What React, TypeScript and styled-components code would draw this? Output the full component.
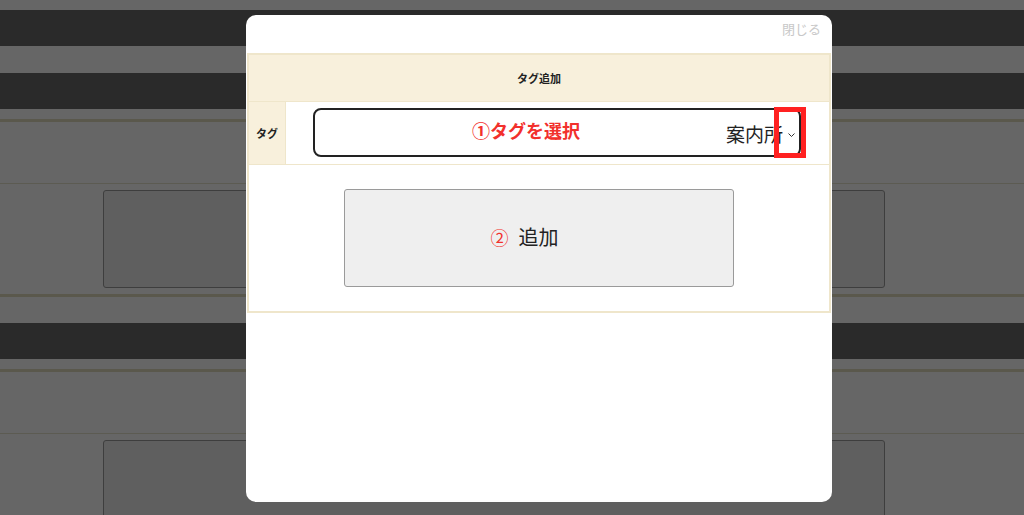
import React from "react";
import styled, { createGlobalStyle } from "styled-components";

const Global = createGlobalStyle`
  html, body { margin: 0; padding: 0; }
  body {
    width: 1024px;
    height: 515px;
    overflow: hidden;
    background: #666666;
    font-family: "Noto Sans CJK JP", "Noto Sans", sans-serif;
  }
`;

const Page = styled.div`
  position: relative;
  width: 1024px;
  height: 515px;
  overflow: hidden;
  background: #666666;
  padding-top: 10px;
  box-sizing: border-box;
`;

const DarkBar = styled.div<{ $gap?: number }>`
  height: 36px;
  background: #2a2a2a;
  margin-top: ${(p) => p.$gap ?? 0}px;
`;

const Section = styled.section`
  margin-top: 10px;
  border-top: 3px solid #5a584c;
  border-bottom: 3px solid #5a584c;
  margin-bottom: 26px;
`;

const SectionHead = styled.div`
  height: 61px;
  border-bottom: 1px solid #5c5b52;
`;

const SectionBody = styled.div`
  padding: 6px 0;
  display: flex;
  justify-content: flex-start;
  padding-left: 103px;
`;

const BgBox = styled.div`
  width: 780px;
  height: 96px;
  border: 1px solid #3e3e3e;
  border-radius: 3px;
  background: #5f5f5f;
`;

const Modal = styled.div`
  position: absolute;
  left: 246px;
  top: 15px;
  width: 586px;
  height: 487px;
  background: #ffffff;
  border-radius: 10px;
  display: flex;
  flex-direction: column;
  padding: 0 1px;
  box-sizing: border-box;
`;

const CloseRow = styled.div`
  height: 38px;
  display: flex;
  justify-content: flex-end;
  align-items: flex-start;
  padding-right: 10px;
`;

const CloseText = styled.span`
  margin-top: 6px;
  font-size: 13px;
  color: #c8c8c8;
  line-height: 16px;
`;

const Panel = styled.div`
  border: 2px solid #efe6cb;
  display: flex;
  flex-direction: column;
`;

const PanelHead = styled.div`
  height: 46px;
  background: #f8f0dc;
  display: flex;
  align-items: center;
  justify-content: center;
  font-size: 11px;
  font-weight: 700;
  color: #222;
`;

const FieldRow = styled.div`
  display: flex;
  height: 62px;
  border-top: 1px solid #efe6cb;
  border-bottom: 1px solid #efe6cb;
`;

const LabelCell = styled.div`
  width: 36px;
  background: #f8f0dc;
  border-right: 1px solid #efe6cb;
  display: flex;
  align-items: center;
  justify-content: center;
  font-size: 11px;
  font-weight: 700;
  color: #222;
`;

const ValueCell = styled.div`
  flex: 1;
  padding: 6px 28px 0 27px;
  position: relative;
`;

const SelectBox = styled.div`
  height: 49px;
  border: 2px solid #222;
  border-radius: 8px;
  box-sizing: border-box;
  display: flex;
  align-items: center;
  justify-content: flex-end;
  padding-right: 3px;
  padding-top: 2px;
  font-size: 19px;
  color: #222;
  gap: 4px;
`;

const Chevron = styled.svg`
  width: 9px;
  height: 8px;
  margin-top: 3px;
`;

const Annotation = styled.span`
  position: absolute;
  left: 186px;
  top: 15px;
  font-size: 18px;
  font-weight: 700;
  color: #f2302c;
  line-height: 26px;
`;

const RedFrame = styled.div`
  position: absolute;
  left: 488px;
  top: 5px;
  width: 32px;
  height: 51px;
  border: 5px solid #ff2121;
  box-sizing: border-box;
`;

const ActionArea = styled.div`
  display: flex;
  justify-content: center;
  padding: 24px 0 24px 0;
  padding-right: 1px;
`;

const AddButton = styled.button`
  width: 390px;
  height: 98px;
  border: 1px solid #9a9a9a;
  border-radius: 3px;
  background: #efefef;
  font-family: inherit;
  font-size: 20px;
  color: #222;
  display: flex;
  align-items: center;
  justify-content: center;
  gap: 10px;
  padding: 0 28px 3px 0;
`;

const Num = styled.span`
  color: #f2302c;
  font-size: 18px;
`;

function BgSection() {
  return (
    <Section>
      <SectionHead />
      <SectionBody>
        <BgBox />
      </SectionBody>
    </Section>
  );
}

export default function App() {
  return (
    <>
      <Global />
      <Page>
        <DarkBar />
        <DarkBar $gap={27} />
        <BgSection />
        <DarkBar />
        <BgSection />
        <Modal>
          <CloseRow>
            <CloseText>閉じる</CloseText>
          </CloseRow>
          <Panel>
            <PanelHead>タグ追加</PanelHead>
            <FieldRow>
              <LabelCell>タグ</LabelCell>
              <ValueCell>
                <SelectBox>
                  <span>案内所</span>
                  <Chevron viewBox="0 0 9 8">
                    <path d="M1.5 2.5 L4.5 5.5 L7.5 2.5" fill="none" stroke="#333" strokeWidth="1" />
                  </Chevron>
                </SelectBox>
                <Annotation>①タグを選択</Annotation>
                <RedFrame />
              </ValueCell>
            </FieldRow>
            <ActionArea>
              <AddButton>
                <Num>②</Num>
                <span>追加</span>
              </AddButton>
            </ActionArea>
          </Panel>
        </Modal>
      </Page>
    </>
  );
}
